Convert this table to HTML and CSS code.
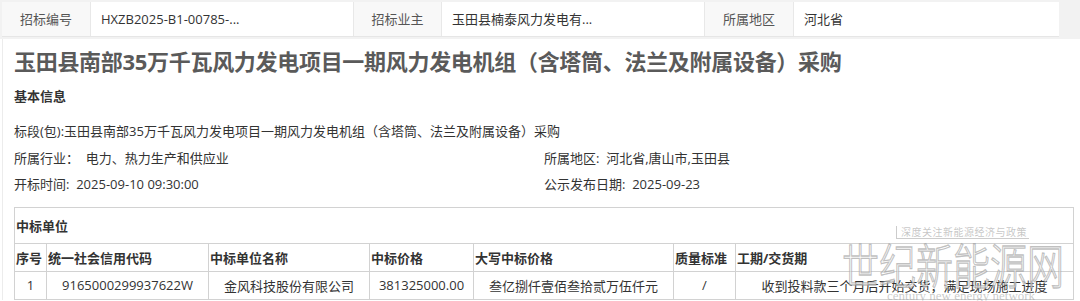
FILE: index.html
```html
<!DOCTYPE html>
<html lang="zh-CN">
<head>
<meta charset="utf-8">
<title>采购公示</title>
<link rel="stylesheet" href="styles.css">
</head>
<body>
<div class="topbar">
  <div class="meta">
    <div class="lbl">招标编号</div>
    <div class="val">HXZB2025-B1-00785-...</div>
    <div class="lbl">招标业主</div>
    <div class="val">玉田县楠泰风力发电有...</div>
    <div class="lbl">所属地区</div>
    <div class="val">河北省</div>
  </div>
</div>
<div class="page">
  <h1 class="title">玉田县南部35万千瓦风力发电项目一期风力发电机组（含塔筒、法兰及附属设备）采购</h1>
  <h2 class="section">基本信息</h2>
  <div class="info">
    <div class="row full">标段(包):玉田县南部35万千瓦风力发电项目一期风力发电机组（含塔筒、法兰及附属设备）采购</div>
    <div class="row">所属行业：&nbsp;&nbsp;电力、热力生产和供应业</div>
    <div class="row">所属地区:&nbsp;&nbsp;河北省,唐山市,玉田县</div>
    <div class="row">开标时间:&nbsp;&nbsp;2025-09-10 09:30:00</div>
    <div class="row">公示发布日期:&nbsp;&nbsp;2025-09-23</div>
  </div>
  <div class="tablewrap">
    <table class="win">
      <colgroup>
        <col class="c1"><col class="c2"><col class="c3"><col class="c4"><col class="c5"><col class="c6"><col class="c7">
      </colgroup>
      <tr class="caption"><th colspan="7">中标单位</th></tr>
      <tr class="head">
        <th>序号</th><th>统一社会信用代码</th><th>中标单位名称</th><th>中标价格</th><th>大写中标价格</th><th>质量标准</th><th>工期/交货期</th>
      </tr>
      <tr class="data">
        <td>1</td><td>9165000299937622W</td><td>金风科技股份有限公司</td><td>381325000.00</td><td>叁亿捌仟壹佰叁拾贰万伍仟元</td><td>/</td><td>收到投料款三个月后开始交货，满足现场施工进度</td>
      </tr>
    </table>
    <div class="wm">
      <div class="wm-tag">深度关注新能源经济与政策</div>
      <div class="wm-big">世纪新能源网</div>
      <div class="wm-en">century new energy network</div>
    </div>
  </div>
</div>
</body>
</html>
```
FILE: styles.css
```css
html, body {
  margin: 0;
  padding: 0;
  background: #fff;
}
body {
  font-family: "Open Sans", "Noto Sans CJK SC", sans-serif;
  font-size: 13px;
  color: #333;
  width: 1080px;
  height: 301px;
  overflow: hidden;
}
.topbar {
  background: #f2f2f2;
  padding: 2px 21px 2px 2px;
  height: 35px;
}
.meta {
  display: grid;
  grid-template-columns: 89px 262px 89px 262px 90px 1fr;
  height: 35px;
  background: #fff;
  border-bottom: 1px solid #e6e6e6;
  box-sizing: border-box;
}
.meta .lbl {
  background: #f8f8f8;
  color: #555;
  text-align: center;
  line-height: 34px;
  border-right: 1px solid #e8e8e8;
  border-left: 1px solid #e8e8e8;
}
.meta .lbl:first-child {
  border-left: none;
}
.meta .val {
  padding-left: 10px;
  line-height: 34px;
  color: #333;
}
.page {
  margin-left: 2px;
  border-left: 1px solid #ececec;
  padding-left: 11px;
  position: relative;
}
.title {
  margin: 0;
  padding-top: 7px;
  font-size: 22px;
  line-height: 30px;
  font-weight: bold;
  color: #5a5a5a;
  letter-spacing: -0.3px;
}
.section {
  margin: 10px 0 0;
  font-size: 13px;
  line-height: 20px;
  font-weight: bold;
  color: #333;
}
.info {
  display: grid;
  grid-template-columns: 530px 1fr;
  margin-top: 12px;
  line-height: 26.5px;
  color: #333;
}
.info .full {
  grid-column: 1 / -1;
}
.tablewrap {
  position: relative;
  margin-top: 9px;
  width: 1059px;
}
.win {
  border-collapse: collapse;
  width: 1059px;
  table-layout: fixed;
  font-size: 13px;
  color: #333;
}
.win th, .win td {
  border: 1px solid #d2d2d2;
  padding: 0 1px;
  white-space: nowrap;
  overflow: hidden;
}
.win th {
  text-align: left;
  font-weight: bold;
}
.win .caption th {
  height: 35px;
}
.win .head th {
  height: 27px;
}
.win .data td {
  height: 27px;
  text-align: center;
}
.c1 { width: 32px; }
.c2 { width: 162px; }
.c3 { width: 161px; }
.c4 { width: 104px; }
.c5 { width: 200px; }
.c6 { width: 62px; }
.c7 { width: 338px; }
.wm {
  position: absolute;
  left: 828px;
  top: 19px;
  width: 240px;
  pointer-events: none;
}
.wm-tag {
  margin-left: 54px;
  width: 128px;
  font-size: 10px;
  line-height: 12px;
  color: rgba(150, 150, 150, 0.55);
  border-left: 1px solid rgba(170, 170, 170, 0.6);
  border-bottom: 1px solid rgba(170, 170, 170, 0.6);
  padding-left: 4px;
  letter-spacing: 0.5px;
  white-space: nowrap;
}
.wm-big {
  margin-top: 1px;
  font-family: "Noto Sans CJK SC", sans-serif;
  font-size: 37px;
  line-height: 37px;
  letter-spacing: 0;
  color: rgba(255, 255, 255, 0.6);
  -webkit-text-stroke: 1px rgba(150, 150, 150, 0.6);
  font-weight: 300;
  white-space: nowrap;
  transform: scaleY(1.3);
  transform-origin: top left;
}
.wm-en {
  margin-top: 13px;
  margin-left: 45px;
  font-family: "Liberation Serif", serif;
  font-size: 13px;
  line-height: 12px;
  color: rgba(160, 160, 160, 0.55);
  white-space: nowrap;
}
```
